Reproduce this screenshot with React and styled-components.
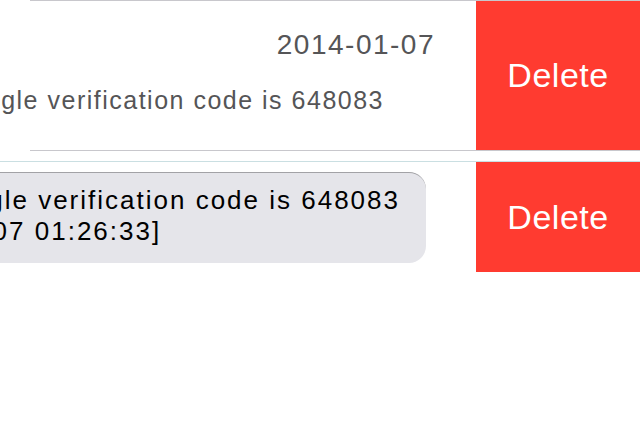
import React from 'react';
import styled, { createGlobalStyle } from 'styled-components';

const GlobalStyle = createGlobalStyle`
  html, body {
    margin: 0;
    padding: 0;
    background: #ffffff;
    overflow: hidden;
  }
  body {
    font-family: 'Liberation Sans', Arial, sans-serif;
  }
`

const Page = styled.div`
  width: 640px;
  height: 431px;
  background: #ffffff;
  display: flex;
  flex-direction: column;
`

const Separator = styled.div`
  height: 1px;
  margin-left: ${p => p.inset || 0}px;
  background: ${p => p.color || '#c8c7cc'};
  flex-shrink: 0;
`

const Gap = styled.div`
  height: ${p => p.size}px;
  flex-shrink: 0;
`

const SwipeRow = styled.div`
  height: ${p => p.height}px;
  display: flex;
  flex-shrink: 0;
`

const Content = styled.div`
  flex: 1;
  min-width: 0;
  overflow: hidden;
  display: flex;
  flex-direction: column;
  align-items: flex-end;
  padding-top: ${p => p.top || 0}px;
  padding-right: ${p => p.right || 0}px;
`

const DateText = styled.div`
  font-size: 28px;
  line-height: 28px;
  letter-spacing: 1.5px;
  color: #555557;
  white-space: nowrap;
`

const Preview = styled.div`
  margin-top: 29px;
  margin-right: 51px;
  font-size: 25px;
  line-height: 25px;
  letter-spacing: 1.5px;
  color: #555557;
  white-space: nowrap;
`

const Bubble = styled.div`
  flex-shrink: 0;
  background: #e5e5ea;
  border-top: 1px solid #a2a2a6;
  border-radius: 17px;
  padding: 12px 26px 16px 20px;
  font-size: 26px;
  line-height: 31px;
  letter-spacing: 2px;
  color: #000000;
  white-space: nowrap;
`

const Line = styled.div``

const DeleteButton = styled.button`
  width: 164px;
  flex-shrink: 0;
  border: none;
  margin: 0;
  padding: 0;
  background: #ff3b30;
  color: #ffffff;
  font-family: 'Liberation Sans', Arial, sans-serif;
  font-size: 34px;
  letter-spacing: 0.5px;
  display: flex;
  align-items: center;
  justify-content: center;
`

export default function App() {
  return (
    <Page>
      <GlobalStyle />
      <Separator inset={30} />
      <SwipeRow height={149}>
        <Content top={30} right={41}>
          <DateText>2014-01-07</DateText>
          <Preview>Your Google verification code is 648083</Preview>
        </Content>
        <DeleteButton>Delete</DeleteButton>
      </SwipeRow>
      <Separator inset={30} />
      <Gap size={10} />
      <Separator color="#cadfe2" />
      <SwipeRow height={110}>
        <Content top={10} right={50}>
          <Bubble>
            <Line>Your Google verification code is 648083</Line>
            <Line>[2014-01-07 01:26:33]</Line>
          </Bubble>
        </Content>
        <DeleteButton>Delete</DeleteButton>
      </SwipeRow>
    </Page>
  )
}
